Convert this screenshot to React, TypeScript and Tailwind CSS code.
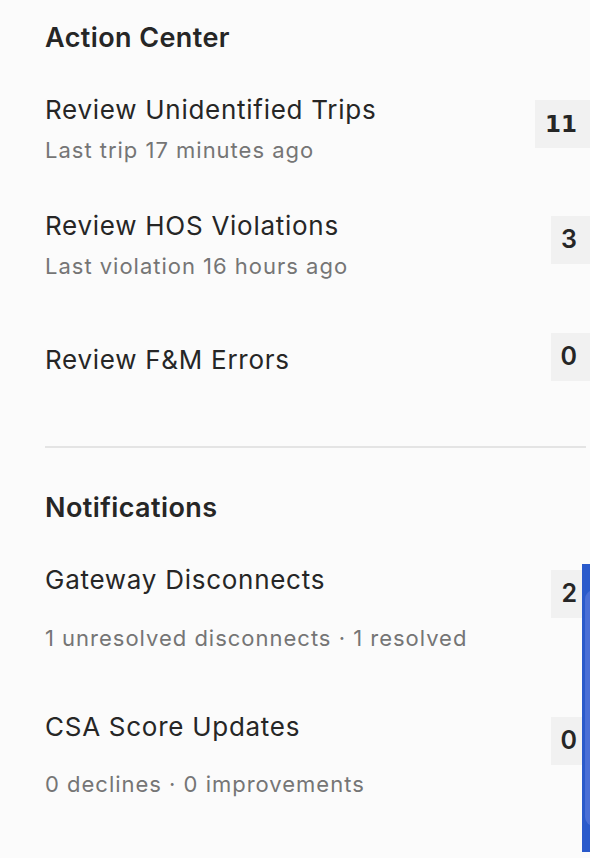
const actionItems = [
  { title: "Review Unidentified Trips", sub: "Last trip 17 minutes ago", count: "11", bold: true },
  { title: "Review HOS Violations", sub: "Last violation 16 hours ago", count: "3" },
];

const Badge = ({ count, bold }: { count: string; bold?: boolean }) => (
  <div
    className={`h-[48px] bg-[#f1f1f1] pl-[10px] pr-[13px] flex items-center text-[#262626] ${
      bold
        ? "text-[23px] font-bold font-['DejaVu_Sans',sans-serif]"
        : "text-[25px] font-semibold font-['Inter',sans-serif]"
    }`}
  >
    {count}
  </div>
);

const App = () => {
  return (
    <div className="relative min-h-[858px] w-full overflow-hidden bg-[#fbfbfb] font-['Inter',sans-serif] text-[#262626]">
      <div className="pl-[45px] pt-[22px]">
        <h2 className="text-[27px] leading-[32px] font-semibold tracking-[0.015em]">Action Center</h2>

        <div className="mt-[40px] flex flex-col gap-[46px]">
          {actionItems.map((item) => (
            <div key={item.title} className="flex items-start justify-between">
              <div>
                <p className="text-[26px] leading-[32px] tracking-[0.028em]">{item.title}</p>
                <p className="mt-[10px] text-[22px] leading-[28px] tracking-[0.045em] text-[#757575]">
                  {item.sub}
                </p>
              </div>
              <div className="mt-[6px]">
                <Badge count={item.count} bold={item.bold} />
              </div>
            </div>
          ))}
        </div>

        <div className="mt-[53px] flex items-center justify-between">
          <p className="text-[26px] leading-[32px] tracking-[0.028em] mt-[6px]">Review F&amp;M Errors</p>
          <Badge count="0" />
        </div>

        <div className="mt-[65px] mr-[4px] h-[2px] bg-[#e4e4e4]" />

        <h2 className="mt-[44px] text-[27px] leading-[32px] font-semibold tracking-[0.015em]">Notifications</h2>

        <div className="mt-[40px] flex items-start justify-between">
          <div>
            <p className="text-[26px] leading-[32px] tracking-[0.028em]">Gateway Disconnects</p>
            <p className="mt-[28px] text-[22px] leading-[28px] tracking-[0.045em] text-[#757575]">
              1 unresolved disconnects · 1 resolved
            </p>
          </div>
          <div className="mt-[6px]">
            <Badge count="2" />
          </div>
        </div>

        <div className="mt-[59px] flex items-start justify-between">
          <div>
            <p className="text-[26px] leading-[32px] tracking-[0.028em]">CSA Score Updates</p>
            <p className="mt-[27px] text-[22px] leading-[28px] tracking-[0.045em] text-[#757575]">
              0 declines · 0 improvements
            </p>
          </div>
          <div className="mt-[6px]">
            <Badge count="0" />
          </div>
        </div>
      </div>

      {/* edge of the card peeking in from the right */}
      <div className="absolute left-[582px] top-[564px] h-[288px] w-[12px] bg-[#2a5acb]">
        <div className="ml-[3px] mt-[26px] h-[236px] rounded-l-[10px] bg-[#4a6fd6]" />
      </div>
    </div>
  );
};

export default App;
